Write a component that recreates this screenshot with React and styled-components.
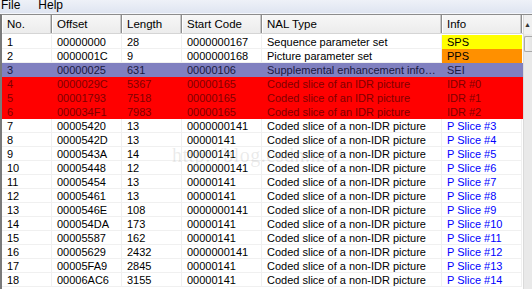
import React from "react";
import styled, { createGlobalStyle } from "styled-components";

const Global = createGlobalStyle`
  html, body { margin: 0; padding: 0; background: #fff; overflow: hidden; }
  body { font-family: "Liberation Sans", Arial, sans-serif; font-size: 11px; }
`;

const COLS = "50px 70px 60px 80px 180px 80px";

const Window = styled.div`
  width: 532px;
  height: 289px;
  overflow: hidden;
  display: flex;
  flex-direction: column;
  background: #fff;
  position: relative;
`;

const MenuBar = styled.div`
  height: 13px;
  flex: none;
  display: flex;
  align-items: flex-end;
  gap: 18px;
  padding-left: 1px;
  background: linear-gradient(#eef1f8, #dfe5f1);
  border-bottom: 1px solid #f4f6fb;
  overflow: hidden;
`;

const MenuItem = styled.span`
  font-size: 12px;
  line-height: 12px;
  margin-bottom: 2px;
  color: #000;
`;

const Frame = styled.div`
  flex: 1;
  display: flex;
  border-top: 1px solid #8c8c8c;
  border-left: 2px solid #7a7a7a;
  min-height: 0;
`;

const List = styled.div`
  width: 521px;
  flex: none;
  display: flex;
  flex-direction: column;
  background: #fff;
`;

const Header = styled.div`
  display: grid;
  grid-template-columns: ${COLS};
  height: 18px;
  border-bottom: 1px solid #d5d5d5;
  margin-bottom: 1px;
`;

const HeadCell = styled.div`
  display: flex;
  align-items: center;
  padding-left: 5px;
  background: linear-gradient(#f7f7f7, #ececec);
  border-right: 1px solid #8e8e8e;
  box-shadow: inset -1px 0 0 #c8c8c8, inset 1px 0 0 #fff;
  font-size: 11.5px;
  color: #000;
`;

const Row = styled.div`
  display: grid;
  grid-template-columns: ${COLS};
  height: 14px;
  background: ${(p) => p.$bg || "transparent"};
  color: ${(p) => p.$fg || "#000"};
`;

const Cell = styled.div`
  padding-left: 5px;
  line-height: 14px;
  height: 14px;
  box-sizing: border-box;
  white-space: nowrap;
  overflow: hidden;
  font-size: 11px;
  border-right: 1px solid ${(p) => (p.$plain ? "#f0f0f0" : "transparent")};
  border-bottom: 1px solid ${(p) => (p.$plain ? "#f0f0f0" : "transparent")};
  background: ${(p) => p.$bg || "transparent"};
  color: ${(p) => p.$fg || "inherit"};
`;

const Scroll = styled.div`
  flex: 1;
  display: flex;
  flex-direction: column;
  background: #e9e9e9;
  border-left: 1px solid #dadada;
`;

const ScrollBtn = styled.div`
  height: 19px;
  display: flex;
  align-items: center;
  justify-content: center;
  background: #f0f0f0;
  font-size: 7px;
  color: #333;
  padding-right: 2px;
`;

const Thumb = styled.div`
  margin-top: 2px;
  height: 14px;
  background: linear-gradient(90deg, #f2f2f2, #e2e2e2);
  border: 1px solid #a8a8a8;
  border-right: none;
  border-radius: 2px 0 0 2px;
`;

const Watermark = styled.div`
  position: absolute;
  left: 172px;
  top: 144px;
  font-family: "Liberation Serif", "DejaVu Serif", serif;
  font-size: 20px;
  letter-spacing: 0.5px;
  color: rgba(160, 160, 160, 0.22);
  pointer-events: none;
`;

const rows = [
  ["1", "00000000", "28", "0000000167", "Sequence parameter set", "SPS", "sps"],
  ["2", "0000001C", "9", "0000000168", "Picture parameter set", "PPS", "pps"],
  ["3", "00000025", "631", "00000106", "Supplemental enhancement info…", "SEI", "sei"],
  ["4", "0000029C", "5367", "00000165", "Coded slice of an IDR picture", "IDR #0", "idr"],
  ["5", "00001793", "7518", "00000165", "Coded slice of an IDR picture", "IDR #1", "idr"],
  ["6", "000034F1", "7983", "00000165", "Coded slice of an IDR picture", "IDR #2", "idr"],
  ["7", "00005420", "13", "0000000141", "Coded slice of a non-IDR picture", "P Slice #3", "p"],
  ["8", "0000542D", "13", "00000141", "Coded slice of a non-IDR picture", "P Slice #4", "p"],
  ["9", "0000543A", "14", "00000141", "Coded slice of a non-IDR picture", "P Slice #5", "p"],
  ["10", "00005448", "12", "0000000141", "Coded slice of a non-IDR picture", "P Slice #6", "p"],
  ["11", "00005454", "13", "00000141", "Coded slice of a non-IDR picture", "P Slice #7", "p"],
  ["12", "00005461", "13", "00000141", "Coded slice of a non-IDR picture", "P Slice #8", "p"],
  ["13", "0000546E", "108", "0000000141", "Coded slice of a non-IDR picture", "P Slice #9", "p"],
  ["14", "000054DA", "173", "00000141", "Coded slice of a non-IDR picture", "P Slice #10", "p"],
  ["15", "00005587", "162", "00000141", "Coded slice of a non-IDR picture", "P Slice #11", "p"],
  ["16", "00005629", "2432", "0000000141", "Coded slice of a non-IDR picture", "P Slice #12", "p"],
  ["17", "00005FA9", "2845", "00000141", "Coded slice of a non-IDR picture", "P Slice #13", "p"],
  ["18", "00006AC6", "3155", "00000141", "Coded slice of a non-IDR picture", "P Slice #14", "p"],
];

const rowStyle = {
  sei: { bg: "#8080c0", fg: "#1a1a40" },
  idr: { bg: "#ff0000", fg: "#800000" },
};
const infoStyle = {
  sps: { bg: "#ffff00", fg: "#000" },
  pps: { bg: "#ff9000", fg: "#000" },
  p: { fg: "#0000ff" },
};

export default function App() {
  return (
    <Window>
      <Global />
      <MenuBar>
        <MenuItem>File</MenuItem>
        <MenuItem>Help</MenuItem>
      </MenuBar>
      <Frame>
        <List>
          <Header>
            {["No.", "Offset", "Length", "Start Code", "NAL Type", "Info"].map((h) => (
              <HeadCell key={h}>{h}</HeadCell>
            ))}
          </Header>
          {rows.map((r) => {
            const rs = rowStyle[r[6]] || {};
            const is = infoStyle[r[6]] || {};
            const plain = !rs.bg;
            return (
              <Row key={r[0]} $bg={rs.bg} $fg={rs.fg}>
                {r.slice(0, 5).map((v, i) => (
                  <Cell key={i} $plain={plain}>{v}</Cell>
                ))}
                <Cell $plain={plain && !is.bg} $bg={is.bg} $fg={is.fg}>{r[5]}</Cell>
              </Row>
            );
          })}
        </List>
        <Scroll>
          <ScrollBtn>▲</ScrollBtn>
          <Thumb />
        </Scroll>
      </Frame>
      <Watermark>http://blog.csdn.net/</Watermark>
    </Window>
  );
}
